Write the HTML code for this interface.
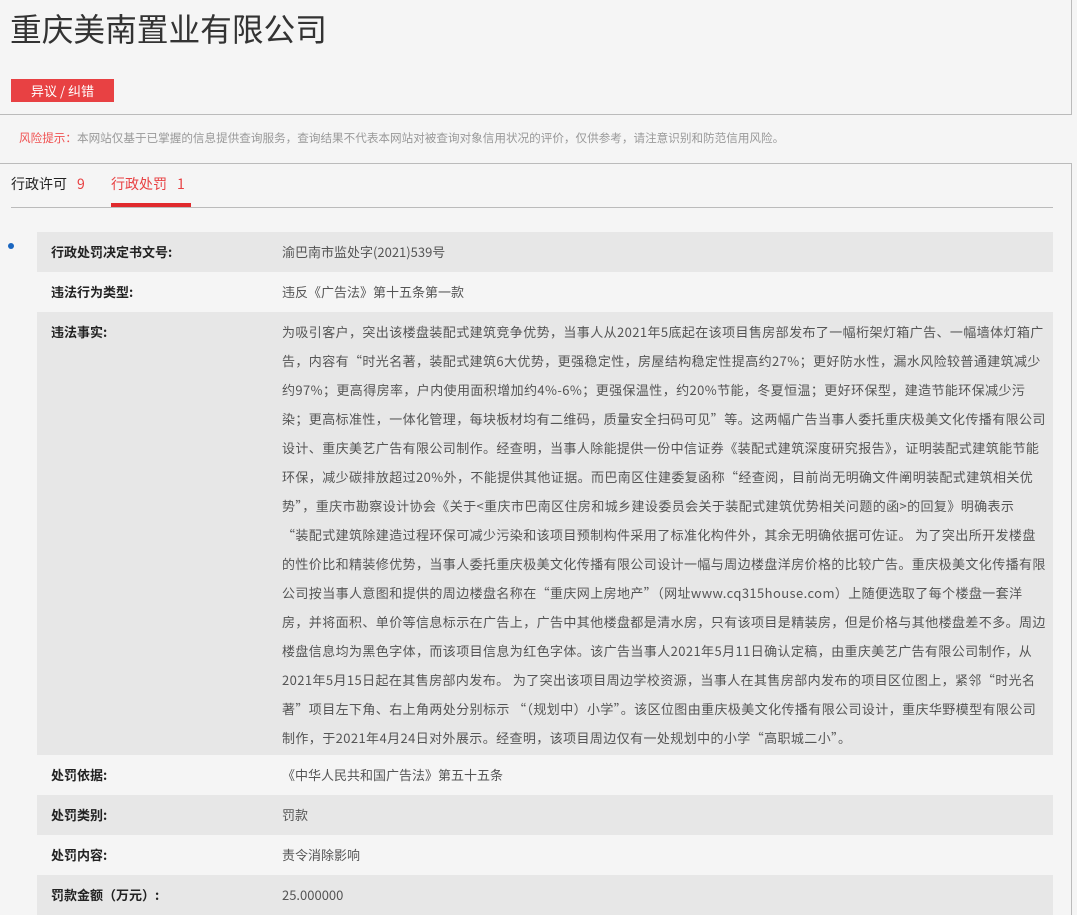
<!DOCTYPE html>
<html><head><meta charset="utf-8"><style>
*{margin:0;padding:0;box-sizing:border-box}
html{height:915px;overflow:hidden}
body{width:1077px;height:915px;overflow:hidden;background:#f5f5f5;font-family:"Noto Sans CJK SC","Liberation Sans",sans-serif;color:#333;position:relative}
.box1{position:absolute;left:-2px;top:-2px;width:1074px;height:117px;border:1px solid #bbb}
h1{position:absolute;left:10px;top:3px;font-size:31.7px;font-weight:normal;color:#333;white-space:nowrap;line-height:50px}
.btn{position:absolute;left:11px;top:79px;width:103px;height:23px;background:#e84143;color:#fff;font-size:13px;line-height:23px;text-align:center}
.risk{position:absolute;left:19px;top:129px;font-size:11.6px;line-height:18px;color:#999;white-space:nowrap}
.risk span{color:#f05050}
.box2{position:absolute;left:-2px;top:163px;width:1074px;height:752px;border:1px solid #bbb;border-bottom:none}
.tabs{position:absolute;left:11px;top:173px;font-size:14px;line-height:22px;white-space:nowrap}
.tab1{position:absolute;left:0;top:0;color:#222}
.tab2{position:absolute;left:100px;top:0;color:#e84143}
.n{color:#e84143;margin-left:10px}
.uline{position:absolute;left:111px;top:203px;width:80px;height:4px;background:#e02a2d}
.hline{position:absolute;left:11px;top:207px;width:1042px;height:1px;background:#bbb}
.dot{position:absolute;left:8px;top:243px;width:6px;height:6px;border-radius:50%;background:#1a66c0}
.row{position:absolute;left:37px;width:1016px;font-size:13px}
.g{background:#e7e7e7}
.lab{position:absolute;left:14px;font-weight:bold;color:#222}
.val{position:absolute;left:245px;color:#555;white-space:nowrap}
.r1{height:40px;line-height:40px}
.fact{letter-spacing:0.4px}
.fact div{height:29px;line-height:29px}
</style></head><body>
<div class="box1"></div>
<h1>重庆美南置业有限公司</h1>
<div class="btn">异议 / 纠错</div>
<div class="risk"><span>风险提示：</span>本网站仅基于已掌握的信息提供查询服务，查询结果不代表本网站对被查询对象信用状况的评价，仅供参考，请注意识别和防范信用风险。</div>
<div class="box2"></div>
<div class="tabs"><div class="tab1">行政许可<span class="n">9</span></div><div class="tab2">行政处罚<span class="n">1</span></div></div>
<div class="uline"></div>
<div class="hline"></div>
<div class="dot"></div>
<div class="row g r1" style="top:232px"><div class="lab">行政处罚决定书文号:</div><div class="val">渝巴南市监处字(2021)539号</div></div>
<div class="row r1" style="top:272px"><div class="lab">违法行为类型:</div><div class="val">违反《广告法》第十五条第一款</div></div>
<div class="row g" style="top:312px;height:443px"><div class="lab" style="top:5px;line-height:29px">违法事实:</div><div class="val fact" style="top:4.5px">
<div>为吸引客户，突出该楼盘装配式建筑竞争优势，当事人从2021年5底起在该项目售房部发布了一幅桁架灯箱广告、一幅墙体灯箱广</div>
<div>告，内容有“时光名著，装配式建筑6大优势，更强稳定性，房屋结构稳定性提高约27%；更好防水性，漏水风险较普通建筑减少</div>
<div>约97%；更高得房率，户内使用面积增加约4%-6%；更强保温性，约20%节能，冬夏恒温；更好环保型，建造节能环保减少污</div>
<div>染；更高标准性，一体化管理，每块板材均有二维码，质量安全扫码可见”等。这两幅广告当事人委托重庆极美文化传播有限公司</div>
<div>设计、重庆美艺广告有限公司制作。经查明，当事人除能提供一份中信证券《装配式建筑深度研究报告》，证明装配式建筑能节能</div>
<div>环保，减少碳排放超过20%外，不能提供其他证据。而巴南区住建委复函称“经查阅，目前尚无明确文件阐明装配式建筑相关优</div>
<div>势”，重庆市勘察设计协会《关于&lt;重庆市巴南区住房和城乡建设委员会关于装配式建筑优势相关问题的函&gt;的回复》明确表示</div>
<div>“装配式建筑除建造过程环保可减少污染和该项目预制构件采用了标准化构件外，其余无明确依据可佐证。 为了突出所开发楼盘</div>
<div>的性价比和精装修优势，当事人委托重庆极美文化传播有限公司设计一幅与周边楼盘洋房价格的比较广告。重庆极美文化传播有限</div>
<div>公司按当事人意图和提供的周边楼盘名称在“重庆网上房地产”（网址www.cq315house.com）上随便选取了每个楼盘一套洋</div>
<div>房，并将面积、单价等信息标示在广告上，广告中其他楼盘都是清水房，只有该项目是精装房，但是价格与其他楼盘差不多。周边</div>
<div>楼盘信息均为黑色字体，而该项目信息为红色字体。该广告当事人2021年5月11日确认定稿，由重庆美艺广告有限公司制作，从</div>
<div>2021年5月15日起在其售房部内发布。 为了突出该项目周边学校资源，当事人在其售房部内发布的项目区位图上，紧邻“时光名</div>
<div>著”项目左下角、右上角两处分别标示 “（规划中）小学”。该区位图由重庆极美文化传播有限公司设计，重庆华野模型有限公司</div>
<div>制作，于2021年4月24日对外展示。经查明，该项目周边仅有一处规划中的小学“高职城二小”。</div>
</div></div>
<div class="row r1" style="top:755px"><div class="lab">处罚依据:</div><div class="val">《中华人民共和国广告法》第五十五条</div></div>
<div class="row g r1" style="top:795px"><div class="lab">处罚类别:</div><div class="val">罚款</div></div>
<div class="row r1" style="top:835px"><div class="lab">处罚内容:</div><div class="val">责令消除影响</div></div>
<div class="row g r1" style="top:875px"><div class="lab">罚款金额（万元）:</div><div class="val">25.000000</div></div>
</body></html>
